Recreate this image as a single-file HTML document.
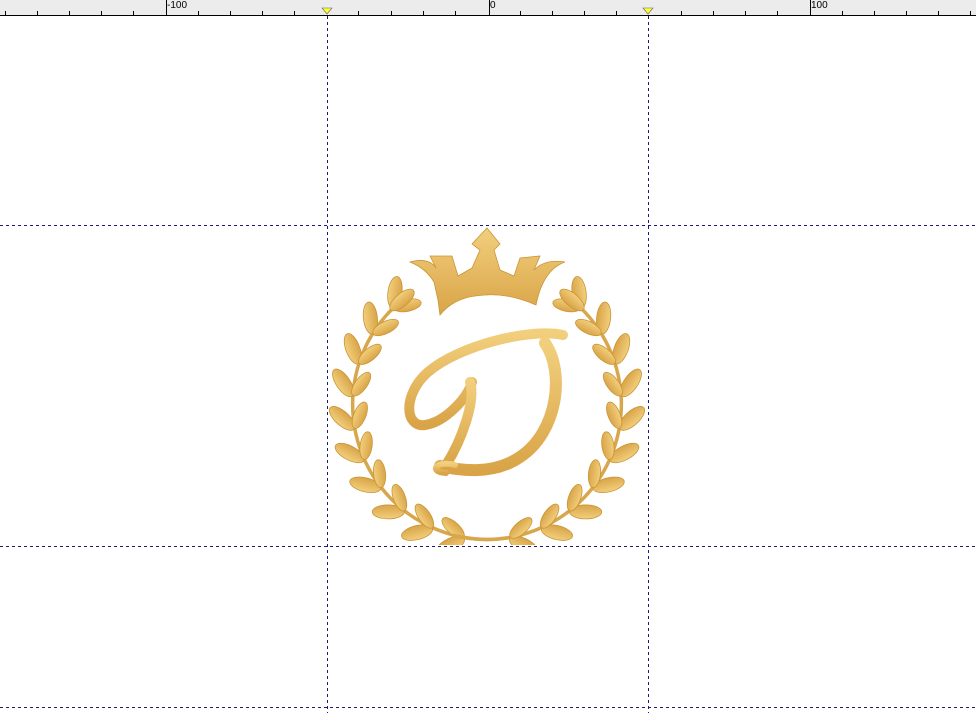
<!DOCTYPE html>
<html><head><style>
html,body{margin:0;padding:0;width:976px;height:713px;overflow:hidden;background:#fff;font-family:"Liberation Sans",sans-serif}
</style></head><body>
<svg width="976" height="713" style="position:absolute;left:0;top:0">
<defs>
<linearGradient id="g" x1="0" y1="0" x2="0" y2="1"><stop offset="0" stop-color="#f2cf7d"/><stop offset="1" stop-color="#d9a447"/></linearGradient>
<g id="pair">
  <ellipse cx="632" cy="417" rx="16" ry="7" transform="rotate(52 632 417)" fill="url(#g)" stroke="#c99536" stroke-width="0.8"/>
  <ellipse cx="614" cy="417" rx="14" ry="6" transform="rotate(122 614 417)" fill="url(#g)" stroke="#c99536" stroke-width="0.8"/>
</g>
<g id="branch">
  <path d="M522,535 A135,135 0 0 1 410,294" fill="none" stroke="#d8a74b" stroke-width="3.5"/>
  <use href="#pair" transform="rotate(100 487 405)"/>
  <use href="#pair" transform="rotate(114 487 405)"/>
  <use href="#pair" transform="rotate(128 487 405)"/>
  <use href="#pair" transform="rotate(142 487 405)"/>
  <use href="#pair" transform="rotate(156 487 405)"/>
  <use href="#pair" transform="rotate(170 487 405)"/>
  <use href="#pair" transform="rotate(184 487 405)"/>
  <use href="#pair" transform="rotate(198 487 405)"/>
  <use href="#pair" transform="rotate(212 487 405)"/>
  <use href="#pair" transform="rotate(226 487 405)"/>
  <ellipse cx="402" cy="300" rx="15" ry="6.5" transform="rotate(-40 402 300)" fill="url(#g)" stroke="#c99536" stroke-width="0.8"/>
</g>
<clipPath id="cl"><rect x="0" y="0" width="976" height="545"/></clipPath>
</defs>
<rect x="0" y="0" width="976" height="15" fill="#ececec"/>
<line x1="0" y1="15.5" x2="976" y2="15.5" stroke="#000"/>
<g stroke="#000" stroke-width="1">
<path d="M5.5,11V15M37.5,11V15M69.5,11V15M101.5,11V15M133.5,11V15M166.5,0V15M198.5,11V15M230.5,11V15M262.5,11V15M294.5,11V15M358.5,11V15M391.5,11V15M423.5,11V15M455.5,11V15M489.5,0V15M520.5,11V15M552.5,11V15M584.5,11V15M616.5,11V15M681.5,11V15M713.5,11V15M745.5,11V15M777.5,11V15M810.5,0V15M842.5,11V15M874.5,11V15M906.5,11V15M938.5,11V15M970.5,11V15"/>
</g>
<g font-size="10" fill="#000"><text x="167" y="8">-100</text><text x="490" y="8">0</text><text x="811" y="8">100</text></g>
<path d="M322,8H332L327,14Z" fill="#ffff33" stroke="#666" stroke-width="0.6"/>
<path d="M643,8H653L648,14Z" fill="#ffff33" stroke="#666" stroke-width="0.6"/>
<g clip-path="url(#cl)">
<use href="#branch"/>
<use href="#branch" transform="translate(974 0) scale(-1 1)"/>
</g>
<g stroke="#1a1a7a" stroke-width="1" stroke-dasharray="3,3">
<line x1="327.5" y1="16" x2="327.5" y2="713"/><line x1="648.5" y1="16" x2="648.5" y2="713"/>
<line x1="0" y1="225.5" x2="976" y2="225.5"/><line x1="0" y1="546.5" x2="976" y2="546.5"/><line x1="0" y1="707.5" x2="976" y2="707.5"/>
</g>
<path d="M410,262 C425,258 432,262 436,268 L430,256 L452,256 L458,276 L472,268 L480,250 L472,244 L487,228 L500,244 L494,250 L500,270 L514,276 L520,258 L540,256 L534,270 C542,262 552,260 565,262 C548,268 540,285 536,305 C520,298 500,292 475,296 C460,298 448,305 440,315 L438,300 L434,282 C428,272 420,266 410,262 Z" fill="url(#g)" stroke="#c99536" stroke-width="0.8"/>
<g fill="none" stroke="url(#g)" stroke-linecap="round">
<path d="M563,335 C530,328 460,345 428,372 C402,395 405,428 425,425 C445,422 468,398 472,382" stroke-width="10"/>
<path d="M545,343 C565,372 558,432 520,457 C492,476 458,470 440,466" stroke-width="12"/>
<path d="M470,382 C476,400 462,440 446,465" stroke-width="10"/>
<path d="M455,465 C436,460 428,472 446,473" stroke-width="6"/>
</g>
</svg>
</body></html>
